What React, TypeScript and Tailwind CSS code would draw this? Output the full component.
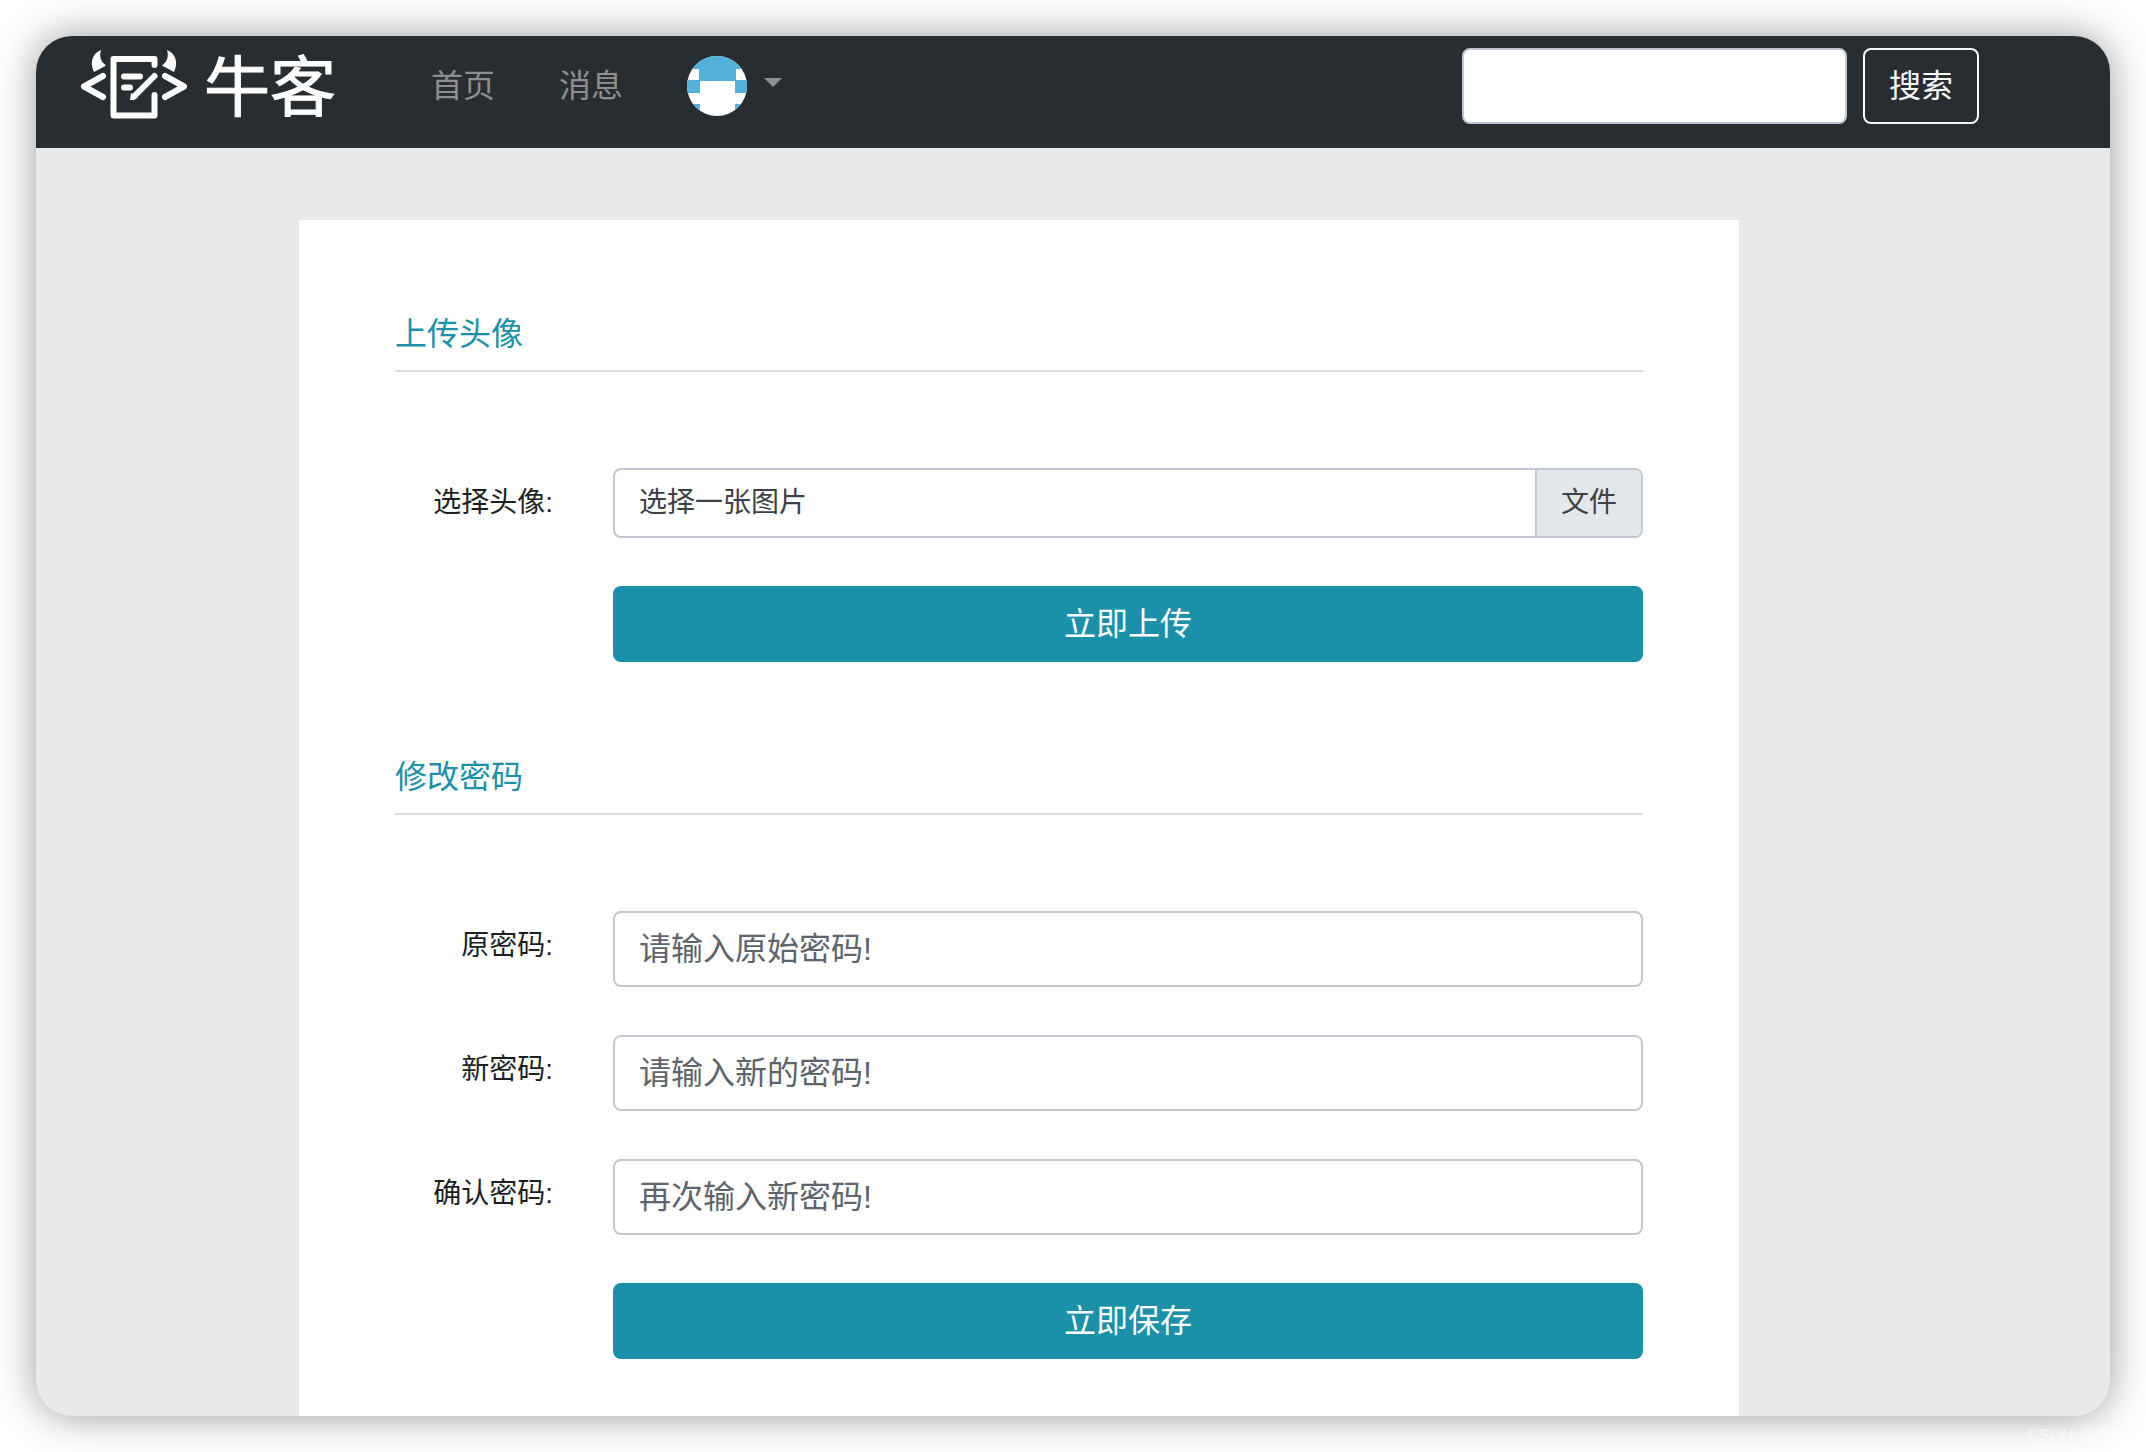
import type { ReactNode } from "react";

const PASSWORD_FIELDS = [
  { id: "old-password", label: "原密码:", placeholder: "请输入原始密码!" },
  { id: "new-password", label: "新密码:", placeholder: "请输入新的密码!" },
  { id: "confirm-password", label: "确认密码:", placeholder: "再次输入新密码!" },
];

function LogoMark() {
  return (
    <svg viewBox="80 48 108 72" className="h-[72px] w-[108px]" aria-hidden="true">
      <g
        fill="none"
        stroke="#fff"
        strokeWidth="6"
        strokeLinecap="round"
        strokeLinejoin="round"
      >
        <path d="M103 76 84 86.5 103 97" />
        <path d="M165 76 184 86.5 165 97" />
        <path d="M154.5 65V59H113.5V115.5H154.5V95" />
        <path d="M124 76.5H140M124 87.5H130" />
        <path d="M154.5 76 135 95.5" />
      </g>
      <path fill="#fff" d="M130 100 131 93 138 97.5 134 100Z" />
      <path fill="#fff" d="M101 50C93 53 89 62 94 72L106 65.500C101 62 99 57 101 50Z" />
      <path fill="#fff" d="M167 50C175 53 179 62 174 72L162 65.500C167 62 169 57 167 50Z" />
    </svg>
  );
}

function Avatar() {
  return (
    <svg viewBox="0 0 60 60" className="size-[60px] rounded-full bg-white" role="img" aria-label="头像">
      <g fill="#52b1d8">
        <path d="M12 0H49V25H12Z" />
        <path d="M0 0H13V13H0ZM48 0H60V13H48Z" />
        <path d="M0 24H13V37H0ZM48 24H60V37H48Z" />
        <path d="M0 48H13V60H0ZM48 48H60V60H48Z" />
      </g>
    </svg>
  );
}

function Section({ title, children }: { title: string; children: ReactNode }) {
  return (
    <form onSubmit={(e) => e.preventDefault()}>
      <h2 className="mb-24 border-b-2 border-[#d8dbe0] pb-4 text-[32px] leading-[39px] text-[#1a91a9]">
        {title}
      </h2>
      <div className="flex flex-col gap-12">{children}</div>
    </form>
  );
}

function Row({ id, label, children }: { id?: string; label?: string; children: ReactNode }) {
  return (
    <div className="flex items-start">
      <div className="w-[218px] shrink-0 pr-[60px] text-right text-[28px] leading-[70px]">
        {label && <label htmlFor={id}>{label}</label>}
      </div>
      <div className="min-w-0 flex-1">{children}</div>
    </div>
  );
}

function SubmitButton({ children }: { children: ReactNode }) {
  return (
    <button
      type="submit"
      className="block h-[76px] w-full rounded-lg bg-[#1a91a9] text-[32px] text-white"
    >
      {children}
    </button>
  );
}

export default function App() {
  return (
    <div className="relative h-screen bg-white p-9 font-['Liberation_Sans','Noto_Sans_CJK_SC',sans-serif] text-[#1c1f22]">
      <div className="flex h-full flex-col overflow-hidden rounded-[36px] bg-[#e9e9e9] shadow-[0_0_40px_rgba(0,0,0,0.4)]">
        <header className="flex h-28 shrink-0 items-start bg-[#282d31] pt-3 pr-[131px] pl-11">
          <a href="#" className="flex items-start text-white">
            <LogoMark />
            <span className="ml-4 text-[66px] leading-[80px] [-webkit-text-stroke:1px_white]">
              牛客
            </span>
          </a>
          <nav className="ml-[95px] flex h-[76px] items-center gap-16 text-[32px] text-[#8d8f92]">
            <a href="#">首页</a>
            <a href="#">消息</a>
            <button type="button" className="flex items-center gap-[17px]" aria-label="用户菜单">
              <Avatar />
              <svg viewBox="0 0 18 9" className="mb-2 h-[9px] w-[18px]" aria-hidden="true">
                <path fill="currentColor" d="M0 0H18L9 9Z" />
              </svg>
            </button>
          </nav>
          <form className="ml-auto flex gap-4" onSubmit={(e) => e.preventDefault()}>
            <input
              type="search"
              aria-label="搜索"
              className="h-[76px] w-[385px] rounded-lg border-2 border-[#bfc6d1] bg-white px-6 text-[32px] text-[#495057]"
            />
            <button
              type="submit"
              className="h-[76px] rounded-lg border-2 border-[#f8f9fa] px-6 text-[32px] text-[#f8f9fa]"
            >
              搜索
            </button>
          </form>
        </header>

        <main className="flex min-h-0 flex-1 justify-center pt-[72px] pr-[108px]">
          <div className="flex w-full max-w-[1440px] flex-col gap-24 bg-white px-24 pt-[95px]">
            <Section title="上传头像">
              <Row id="avatar-file" label="选择头像:">
                <label
                  htmlFor="avatar-file"
                  className="flex h-[70px] overflow-hidden rounded-lg border-2 border-[#c2c8d2] text-[28px] leading-[66px] text-[#3c4147]"
                >
                  <span className="flex-1 pl-6">选择一张图片</span>
                  <span className="border-l-2 border-[#c2c8d2] bg-[#e3e6eb] px-6">文件</span>
                </label>
                <input id="avatar-file" type="file" className="sr-only" />
              </Row>
              <Row>
                <SubmitButton>立即上传</SubmitButton>
              </Row>
            </Section>

            <Section title="修改密码">
              {PASSWORD_FIELDS.map((field) => (
                <Row key={field.id} id={field.id} label={field.label}>
                  <input
                    id={field.id}
                    type="password"
                    placeholder={field.placeholder}
                    className="block h-[76px] w-full rounded-lg border-2 border-[#c2c8d2] px-6 text-[32px] placeholder:text-[#5c646c]"
                  />
                </Row>
              ))}
              <Row>
                <SubmitButton>立即保存</SubmitButton>
              </Row>
            </Section>
          </div>
        </main>
      </div>
      <p className="absolute right-1 bottom-1 text-base text-white/60">CSDN @美夕宣</p>
    </div>
  );
}
